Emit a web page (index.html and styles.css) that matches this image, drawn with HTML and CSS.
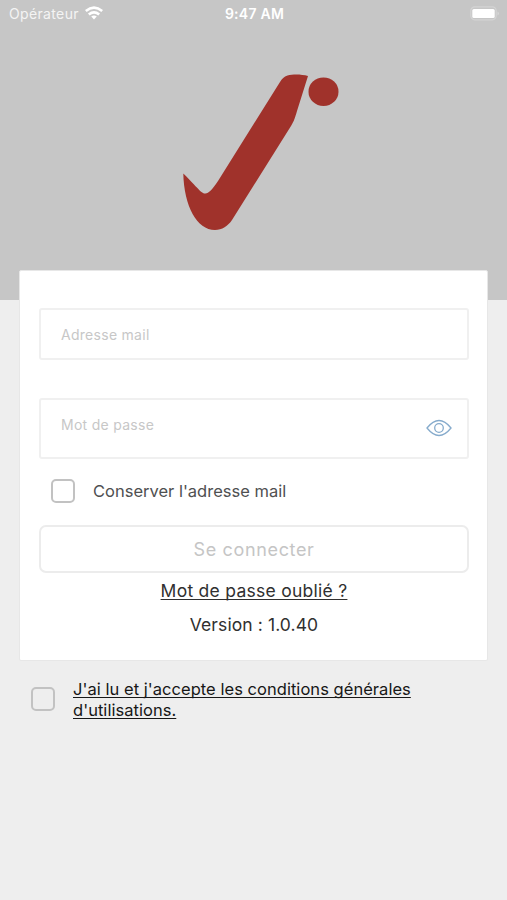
FILE: index.html
```html
<!DOCTYPE html>
<html lang="fr">
<head>
<meta charset="utf-8">
<title>Connexion</title>
<link rel="stylesheet" href="styles.css">
</head>
<body>
<header class="hero">
  <div class="status">
    <div class="carrier"><span class="carrier-name">Opérateur</span>
      <svg class="wifi" viewBox="0 0 18 14" width="18" height="14"><g fill="none" stroke="#fff" stroke-width="2.6"><path d="M.8 5Q9-1.800 17.200 5"/><path d="M3.800 8.400Q9 4.200 14.200 8.400"/></g><path d="M9 13.400L6.200 10.600Q9 8.600 11.800 10.600Z" fill="#fff"/></svg>
    </div>
    <div class="clock">9:47 AM</div>
    <svg class="battery" viewBox="0 0 30 15" width="30" height="15"><rect x=".8" y=".8" width="25.4" height="13" rx="4" fill="none" stroke="#d4d4d4" stroke-width="1.2"/><rect x="2.3" y="3" width="22.4" height="9" rx="1.500" fill="#fff"/><path d="M27.6 5.5Q30 7.4 27.6 9.4Z" fill="#dcdcdc"/></svg>
  </div>
  <svg class="logo" viewBox="170 60 180 180" width="180" height="180" fill="#a0322b"><path d="M308 76C301 74 293 74 287.500 75.500C284 76.500 282 79 280 82L218 181C212 190 208 194 205 193.500C201 193.300 198 188 183.300 173.500C184 206 197 230 215 230C222 230 228 226 232 220L291 126C294 121 295 118 297 111Z"/><ellipse cx="323.500" cy="91.700" rx="15" ry="14.300"/></svg>
</header>
<main class="card">
  <div class="field mail"><span class="hint">Adresse mail</span></div>
  <div class="field password"><span class="hint">Mot de passe</span>
    <svg class="eye" viewBox="0 0 26 18" width="26" height="18" fill="none" stroke="#86abcc" stroke-width="1.3"><path d="M1 9Q7 1.500 13 1.500T25 9Q19 16.500 13 16.500T1 9Z"/><circle cx="13" cy="9" r="4.300"/></svg>
  </div>
  <label class="keep"><span class="box"></span><span class="keep-text">Conserver l'adresse mail</span></label>
  <button class="submit"><span>Se connecter</span></button>
  <a class="forgot">Mot de passe oublié ?</a>
  <div class="version">Version : 1.0.40</div>
</main>
<label class="terms"><span class="box"></span><span class="terms-text">J'ai lu et j'accepte les conditions générales<br>d'utilisations.</span></label>
</body>
</html>
```
FILE: styles.css
```css
* { box-sizing: border-box; }
body { margin: 0; height: 900px; overflow: hidden; background: #eee; font-family: Inter, "Liberation Sans", sans-serif; }
.hero { height: 300px; background: #c6c6c6; display: flex; flex-direction: column; align-items: center; }
.status { width: 100%; height: 28px; padding: 0 7px 0 9px; display: grid; grid-template-columns: 1fr auto 1fr; align-items: center; color: #fff; font-size: 14px; }
.carrier { display: flex; align-items: center; gap: 6px; color: #f4f4f4; }
.carrier-name { letter-spacing: .35px; margin-top: -1px; }
.wifi { display: block; margin-top: -2px; }
.clock { font-weight: 600; letter-spacing: .25px; margin-top: -1px; }
.battery { justify-self: end; margin-top: -2px; }
.logo { display: block; margin: 32px 0 0 13px; }
.card { width: 469px; height: 391px; margin: -30px 0 0 19px; padding: 37px 18px 0 19px; background: #fff; border: 1px solid #e7e7e7; border-radius: 2px; display: flex; flex-direction: column; position: relative; }
.field { border: 2px solid #f0f0f0; border-radius: 3px; padding: 0 15px 0 20px; display: flex; justify-content: space-between; align-items: center; color: #c7c7c7; font-size: 14px; letter-spacing: .28px; }
.mail { height: 52px; }
.password { height: 61px; margin-top: 38px; }
.password .hint { margin-top: -9px; }
.eye { margin-top: -2px; }
.box { flex: none; width: 24px; height: 24px; border: 2px solid #c2c2c2; border-radius: 5px; }
.keep { display: flex; align-items: center; gap: 18px; margin: 20px 0 0 12px; height: 24px; color: #4f5051; font-size: 16.5px; }
.submit { height: 48px; margin-top: 22px; border: 2px solid #ececec; border-radius: 7px; background: #fff; color: #c5c5c5; font: 18px Inter, sans-serif; letter-spacing: .65px; }
.forgot, .version { align-self: center; color: #303030; font-size: 17.5px; line-height: 22px; letter-spacing: .1px; }
.forgot { margin-top: 7px; letter-spacing: .27px; text-decoration: underline; text-decoration-thickness: 1px; text-underline-offset: 2px; text-decoration-skip-ink: none; }
.version { margin-top: 12px; }
.terms { display: flex; gap: 18px; margin: 18px 0 0 31px; }
.terms .box { margin-top: 8px; }
.terms-text { color: #171717; font-size: 16.5px; letter-spacing: .04px; line-height: 21px; text-decoration: underline; text-decoration-thickness: 1px; text-underline-offset: 2px; text-decoration-skip-ink: none; }
```
